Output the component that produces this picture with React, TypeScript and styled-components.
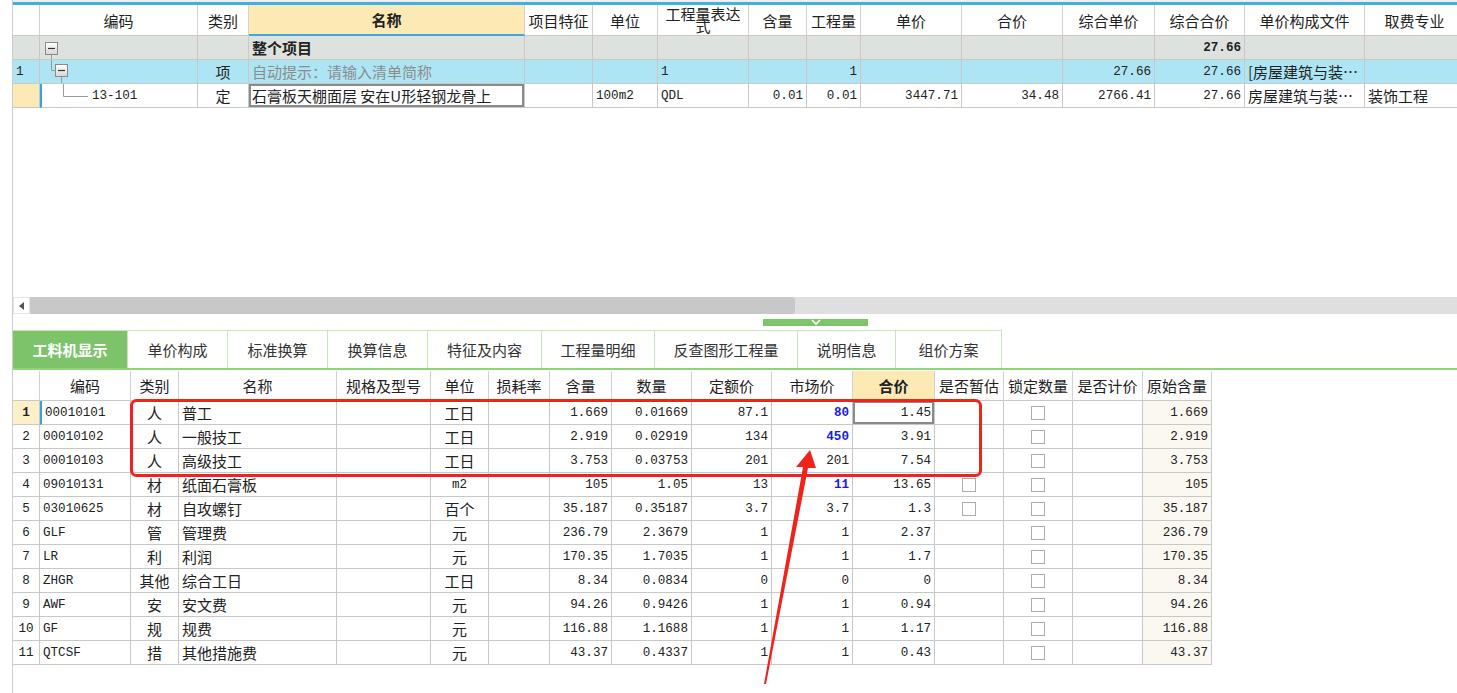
import React from "react";
import styled, { createGlobalStyle } from "styled-components";

const CJK = `"Noto Sans CJK SC", "Liberation Sans", sans-serif`;
const MONO = `"Liberation Mono", "Noto Sans CJK SC", monospace`;

const GlobalStyle = createGlobalStyle`
  html, body { margin: 0; padding: 0; background: #fff; }
  body { font-family: ${CJK}; color: #222; }
`;

const Page = styled.div`
  position: relative;
  width: 1457px;
  height: 693px;
  overflow: hidden;
`;

const Frame = styled.div`
  margin-left: 12px;
  height: 693px;
  border-left: 1px solid #cdcdcd;
  display: flex;
  flex-direction: column;
  overflow: hidden;
`;

const TopStrip = styled.div`
  flex: none;
  height: 2px;
  background: #eef1f4;
  border-bottom: 3px solid #3fafe6;
`;

const TopPane = styled.div`
  flex: none;
  height: 292px;
`;

const Row = styled.div<{ $h: number; $bg?: string }>`
  display: flex;
  flex: none;
  height: ${(p) => p.$h}px;
  background: ${(p) => p.$bg || "transparent"};
`;

const HeadCell = styled.div<{ $w: number; $hl?: boolean; $line?: boolean }>`
  box-sizing: border-box;
  flex: none;
  width: ${(p) => p.$w}px;
  display: flex;
  align-items: center;
  justify-content: center;
  text-align: center;
  padding: 0 1px;
  font-family: ${CJK};
  font-size: 15px;
  line-height: 15px;
  font-weight: ${(p) => (p.$hl ? 700 : 400)};
  background: ${(p) => (p.$hl ? "#fde9b4" : "#fff")};
  border-right: 1px solid #d2d2d2;
  border-bottom: ${(p) => (p.$line ? "2px solid #3fa6e0" : "1px solid #c8c8c8")};
`;

const HeadText = styled.span<{ $wrap?: boolean }>`
  display: block;
  max-width: ${(p) => (p.$wrap ? "76px" : "none")};
  line-height: ${(p) => (p.$wrap ? "12px" : "15px")};
  white-space: ${(p) => (p.$wrap ? "normal" : "nowrap")};
`;

type Align = "l" | "c" | "r";

const Cell = styled.div<{
  $w: number;
  $a?: Align;
  $bg?: string;
  $b?: boolean;
  $m?: boolean;
  $color?: string;
  $mark?: boolean;
  $sel?: boolean;
  $flush?: boolean;
}>`
  box-sizing: border-box;
  flex: none;
  width: ${(p) => p.$w}px;
  display: flex;
  align-items: center;
  justify-content: ${(p) => (p.$a === "r" ? "flex-end" : p.$a === "c" ? "center" : "flex-start")};
  padding: ${(p) => (p.$flush ? "0" : "0 3px")};
  border-right: 1px solid #c8c8c8;
  border-bottom: 1px solid #c8c8c8;
  background: ${(p) => p.$bg || "transparent"};
  font-family: ${(p) => (p.$m ? MONO : CJK)};
  font-size: ${(p) => (p.$m ? "12.6px" : "15px")};
  font-weight: ${(p) => (p.$b ? 700 : 400)};
  color: ${(p) => p.$color || "#222"};
  white-space: nowrap;
  overflow: hidden;
  ${(p) => (p.$mark ? "border-left: 2px solid #3d9fdc;" : "")}
  ${(p) => (p.$sel ? "box-shadow: inset 0 0 0 2px #8a8a8a, inset 0 2px 0 0 #7cc0e8;" : "")}
`;

const HScroll = styled.div`
  flex: none;
  display: flex;
  height: 17px;
  background: #dfdfdf;
`;

const ScrollBtn = styled.div`
  box-sizing: border-box;
  width: 17px;
  height: 17px;
  background: #fff;
  border: 1px solid #e4e4e4;
  display: flex;
  align-items: center;
  justify-content: center;
`;

const ScrollThumb = styled.div`
  width: 765px;
  height: 17px;
  background: #c8c8c8;
  border-radius: 0 3px 3px 0;
`;

const Splitter = styled.div`
  flex: none;
  height: 16px;
  padding-top: 5px;
  box-sizing: border-box;
`;

const Handle = styled.div`
  margin-left: 750px;
  width: 105px;
  height: 7px;
  background: #7ec46b;
  display: flex;
  justify-content: center;
`;

const TabBar = styled.div`
  flex: none;
  display: flex;
  height: 38px;
  border-bottom: 2px solid #92d27e;
`;

const Tab = styled.div<{ $w: number; $on?: boolean }>`
  box-sizing: border-box;
  flex: none;
  width: ${(p) => p.$w}px;
  display: flex;
  align-items: center;
  justify-content: center;
  font-family: ${CJK};
  font-size: 15px;
  font-weight: ${(p) => (p.$on ? 700 : 400)};
  color: ${(p) => (p.$on ? "#fff" : "#333")};
  background: ${(p) => (p.$on ? "#7cc36a" : "#fff")};
  border-top: 1px solid #c4e7b6;
  border-right: 1px solid #c4e7b6;
`;

const LowerTable = styled.div`
  flex: none;
  margin-top: 1px;
`;

const Check = styled.span`
  box-sizing: border-box;
  display: block;
  width: 14px;
  height: 14px;
  background: #fff;
  border: 1px solid #acacac;
`;

const Overlay = styled.svg`
  position: absolute;
  left: 0;
  top: 0;
  pointer-events: none;
`;

const MinusBox = ({ x, y }: { x: number; y: number }) => (
  <g>
    <defs>
      <linearGradient id="mb" x1="0" y1="0" x2="0" y2="1">
        <stop offset="0" stopColor="#ffffff" />
        <stop offset="1" stopColor="#d6d6d6" />
      </linearGradient>
    </defs>
    <rect x={x + 0.5} y={y + 0.5} width={12} height={12} fill="url(#mb)" stroke="#8a8a8a" />
    <line x1={x + 3} y1={y + 6.5} x2={x + 10} y2={y + 6.5} stroke="#333" strokeWidth={1.2} />
  </g>
);

const Tree = ({ kind }: { kind: "root" | "item" | "leaf" }) => {
  if (kind === "root")
    return (
      <svg width={30} height={23}>
        <line x1={11.5} y1={18} x2={11.5} y2={23} stroke="#9a9a9a" />
        <MinusBox x={5} y={6} />
      </svg>
    );
  if (kind === "item")
    return (
      <svg width={40} height={23}>
        <line x1={11.5} y1={0} x2={11.5} y2={10.5} stroke="#9a9a9a" />
        <line x1={11.5} y1={10.5} x2={16} y2={10.5} stroke="#9a9a9a" />
        <line x1={21.5} y1={17} x2={21.5} y2={23} stroke="#9a9a9a" />
        <MinusBox x={15} y={4} />
      </svg>
    );
  return (
    <svg width={50} height={23}>
      <line x1={21.5} y1={0} x2={21.5} y2={12.5} stroke="#9a9a9a" />
      <line x1={21.5} y1={12.5} x2={46} y2={12.5} stroke="#9a9a9a" />
    </svg>
  );
};

type Spec = {
  t?: React.ReactNode;
  a?: Align;
  m?: boolean;
  b?: boolean;
  color?: string;
  bg?: string;
  mark?: boolean;
  sel?: boolean;
  flush?: boolean;
};

const topCols: { w: number; title: string; hl?: boolean; wrap?: boolean }[] = [
  { w: 27, title: "" },
  { w: 158, title: "编码" },
  { w: 51, title: "类别" },
  { w: 276, title: "名称", hl: true },
  { w: 68, title: "项目特征" },
  { w: 65, title: "单位" },
  { w: 91, title: "工程量表达式", wrap: true },
  { w: 58, title: "含量" },
  { w: 54, title: "工程量" },
  { w: 101, title: "单价" },
  { w: 101, title: "合价" },
  { w: 92, title: "综合单价" },
  { w: 90, title: "综合合价" },
  { w: 120, title: "单价构成文件" },
  { w: 100, title: "取费专业" },
];

const topRows: { bg: string; cells: Spec[] }[] = [
  {
    bg: "#dde2de",
    cells: [
      {}, { t: <Tree kind="root" />, flush: true }, {}, { t: "整个项目", b: true },
      {}, {}, {}, {}, {}, {}, {}, {},
      { t: "27.66", a: "r", m: true, b: true }, {}, {},
    ],
  },
  {
    bg: "#aee5f5",
    cells: [
      { t: "1", m: true }, { t: <Tree kind="item" />, flush: true }, { t: "项", a: "c" },
      { t: "自动提示：请输入清单简称", color: "#8c8c8c" },
      {}, {}, { t: "1", m: true }, {}, { t: "1", a: "r", m: true }, {}, {},
      { t: "27.66", a: "r", m: true }, { t: "27.66", a: "r", m: true },
      { t: "[房屋建筑与装…" }, {},
    ],
  },
  {
    bg: "#fff",
    cells: [
      { bg: "#fde9b6" },
      { t: <><Tree kind="leaf" /><span style={{ fontFamily: MONO, fontSize: "12.6px" }}>13-101</span></>, flush: true, mark: true },
      { t: "定", a: "c" },
      { t: "石膏板天棚面层 安在U形轻钢龙骨上", sel: true },
      {}, { t: "100m2", m: true }, { t: "QDL", m: true },
      { t: "0.01", a: "r", m: true }, { t: "0.01", a: "r", m: true },
      { t: "3447.71", a: "r", m: true }, { t: "34.48", a: "r", m: true },
      { t: "2766.41", a: "r", m: true }, { t: "27.66", a: "r", m: true },
      { t: "房屋建筑与装…" }, { t: "装饰工程" },
    ],
  },
];

const tabs: { w: number; label: string }[] = [
  { w: 115, label: "工料机显示" },
  { w: 100, label: "单价构成" },
  { w: 100, label: "标准换算" },
  { w: 100, label: "换算信息" },
  { w: 114, label: "特征及内容" },
  { w: 113, label: "工程量明细" },
  { w: 143, label: "反查图形工程量" },
  { w: 98, label: "说明信息" },
  { w: 106, label: "组价方案" },
];

const lowCols = [27, 91, 48, 158, 94, 58, 61, 62, 80, 80, 81, 82, 69, 69, 70, 69];
const lowHead = ["", "编码", "类别", "名称", "规格及型号", "单位", "损耗率", "含量", "数量", "定额价", "市场价", "合价", "是否暂估", "锁定数量", "是否计价", "原始含量"];

type Item = [string, string, string, string, string, string, string, string, string, string, boolean, boolean];
// code, cat, name, unit, 含量, 数量, 定额价, 市场价, 合价, 原始含量, 市场价改过, 暂估框
const items: Item[] = [
  ["00010101", "人", "普工", "工日", "1.669", "0.01669", "87.1", "80", "1.45", "1.669", true, false],
  ["00010102", "人", "一般技工", "工日", "2.919", "0.02919", "134", "450", "3.91", "2.919", true, false],
  ["00010103", "人", "高级技工", "工日", "3.753", "0.03753", "201", "201", "7.54", "3.753", false, false],
  ["09010131", "材", "纸面石膏板", "m2", "105", "1.05", "13", "11", "13.65", "105", true, true],
  ["03010625", "材", "自攻螺钉", "百个", "35.187", "0.35187", "3.7", "3.7", "1.3", "35.187", false, true],
  ["GLF", "管", "管理费", "元", "236.79", "2.3679", "1", "1", "2.37", "236.79", false, false],
  ["LR", "利", "利润", "元", "170.35", "1.7035", "1", "1", "1.7", "170.35", false, false],
  ["ZHGR", "其他", "综合工日", "工日", "8.34", "0.0834", "0", "0", "0", "8.34", false, false],
  ["AWF", "安", "安文费", "元", "94.26", "0.9426", "1", "1", "0.94", "94.26", false, false],
  ["GF", "规", "规费", "元", "116.88", "1.1688", "1", "1", "1.17", "116.88", false, false],
  ["QTCSF", "措", "其他措施费", "元", "43.37", "0.4337", "1", "1", "0.43", "43.37", false, false],
];

function lowCells(it: Item, i: number): Spec[] {
  const [code, cat, name, unit, qty, amt, base, market, total, orig, changed, est] = it;
  const first = i === 0;
  return [
    { t: String(i + 1), a: "c", m: true, b: first, bg: first ? "#fdf0c8" : undefined },
    { t: code, m: true, mark: first },
    { t: cat, a: "c" },
    { t: name },
    {},
    { t: unit, a: "c", m: unit === "m2" },
    {},
    { t: qty, a: "r", m: true },
    { t: amt, a: "r", m: true },
    { t: base, a: "r", m: true },
    { t: market, a: "r", m: true, b: changed, color: changed ? "#1616ff" : undefined },
    { t: total, a: "r", m: true, sel: first },
    { t: est ? <Check /> : null, a: "c" },
    { t: <Check />, a: "c" },
    {},
    { t: orig, a: "r", m: true, bg: "#fbf8f1" },
  ];
}

const renderCell = (s: Spec, w: number, k: number) => (
  <Cell key={k} $w={w} $a={s.a} $m={s.m} $b={s.b} $color={s.color} $bg={s.bg} $mark={s.mark} $sel={s.sel} $flush={s.flush}>
    {s.t}
  </Cell>
);

export default function App() {
  return (
    <Page>
      <GlobalStyle />
      <Frame>
        <TopStrip />
        <TopPane>
          <Row $h={31}>
            {topCols.map((c, i) => (
              <HeadCell key={i} $w={c.w} $hl={c.hl} $line={c.hl}>
                <HeadText $wrap={c.wrap}>{c.title}</HeadText>
              </HeadCell>
            ))}
          </Row>
          {topRows.map((r, ri) => (
            <Row key={ri} $h={24} $bg={r.bg}>
              {r.cells.map((s, ci) => renderCell(s, topCols[ci].w, ci))}
            </Row>
          ))}
        </TopPane>

        <HScroll>
          <ScrollBtn>
            <svg width={6} height={8}>
              <polygon points="5,0 5,8 0,4" fill="#555" />
            </svg>
          </ScrollBtn>
          <ScrollThumb />
        </HScroll>

        <Splitter>
          <Handle>
            <svg width={12} height={7}>
              <polyline points="2,1 6,5 10,1" fill="none" stroke="#fff" strokeWidth={1.6} />
            </svg>
          </Handle>
        </Splitter>

        <TabBar>
          {tabs.map((t, i) => (
            <Tab key={t.label} $w={t.w} $on={i === 0}>
              {t.label}
            </Tab>
          ))}
        </TabBar>

        <LowerTable>
          <Row $h={30}>
            {lowHead.map((h, i) => (
              <HeadCell key={i} $w={lowCols[i]} $hl={h === "合价"}>
                <HeadText>{h}</HeadText>
              </HeadCell>
            ))}
          </Row>
          {items.map((it, i) => (
            <Row key={i} $h={24}>
              {lowCells(it, i).map((s, ci) => renderCell(s, lowCols[ci], ci))}
            </Row>
          ))}
        </LowerTable>
      </Frame>

      <Overlay width={1457} height={693}>
        <rect x={131.5} y={400.5} width={849} height={75} rx={5} fill="none" stroke="#f0231c" strokeWidth={3} />
        <polygon points="764,684 803,467 796,467 810,450 816,468 808,468 766,684" fill="#f0231c" />
      </Overlay>
    </Page>
  );
}
